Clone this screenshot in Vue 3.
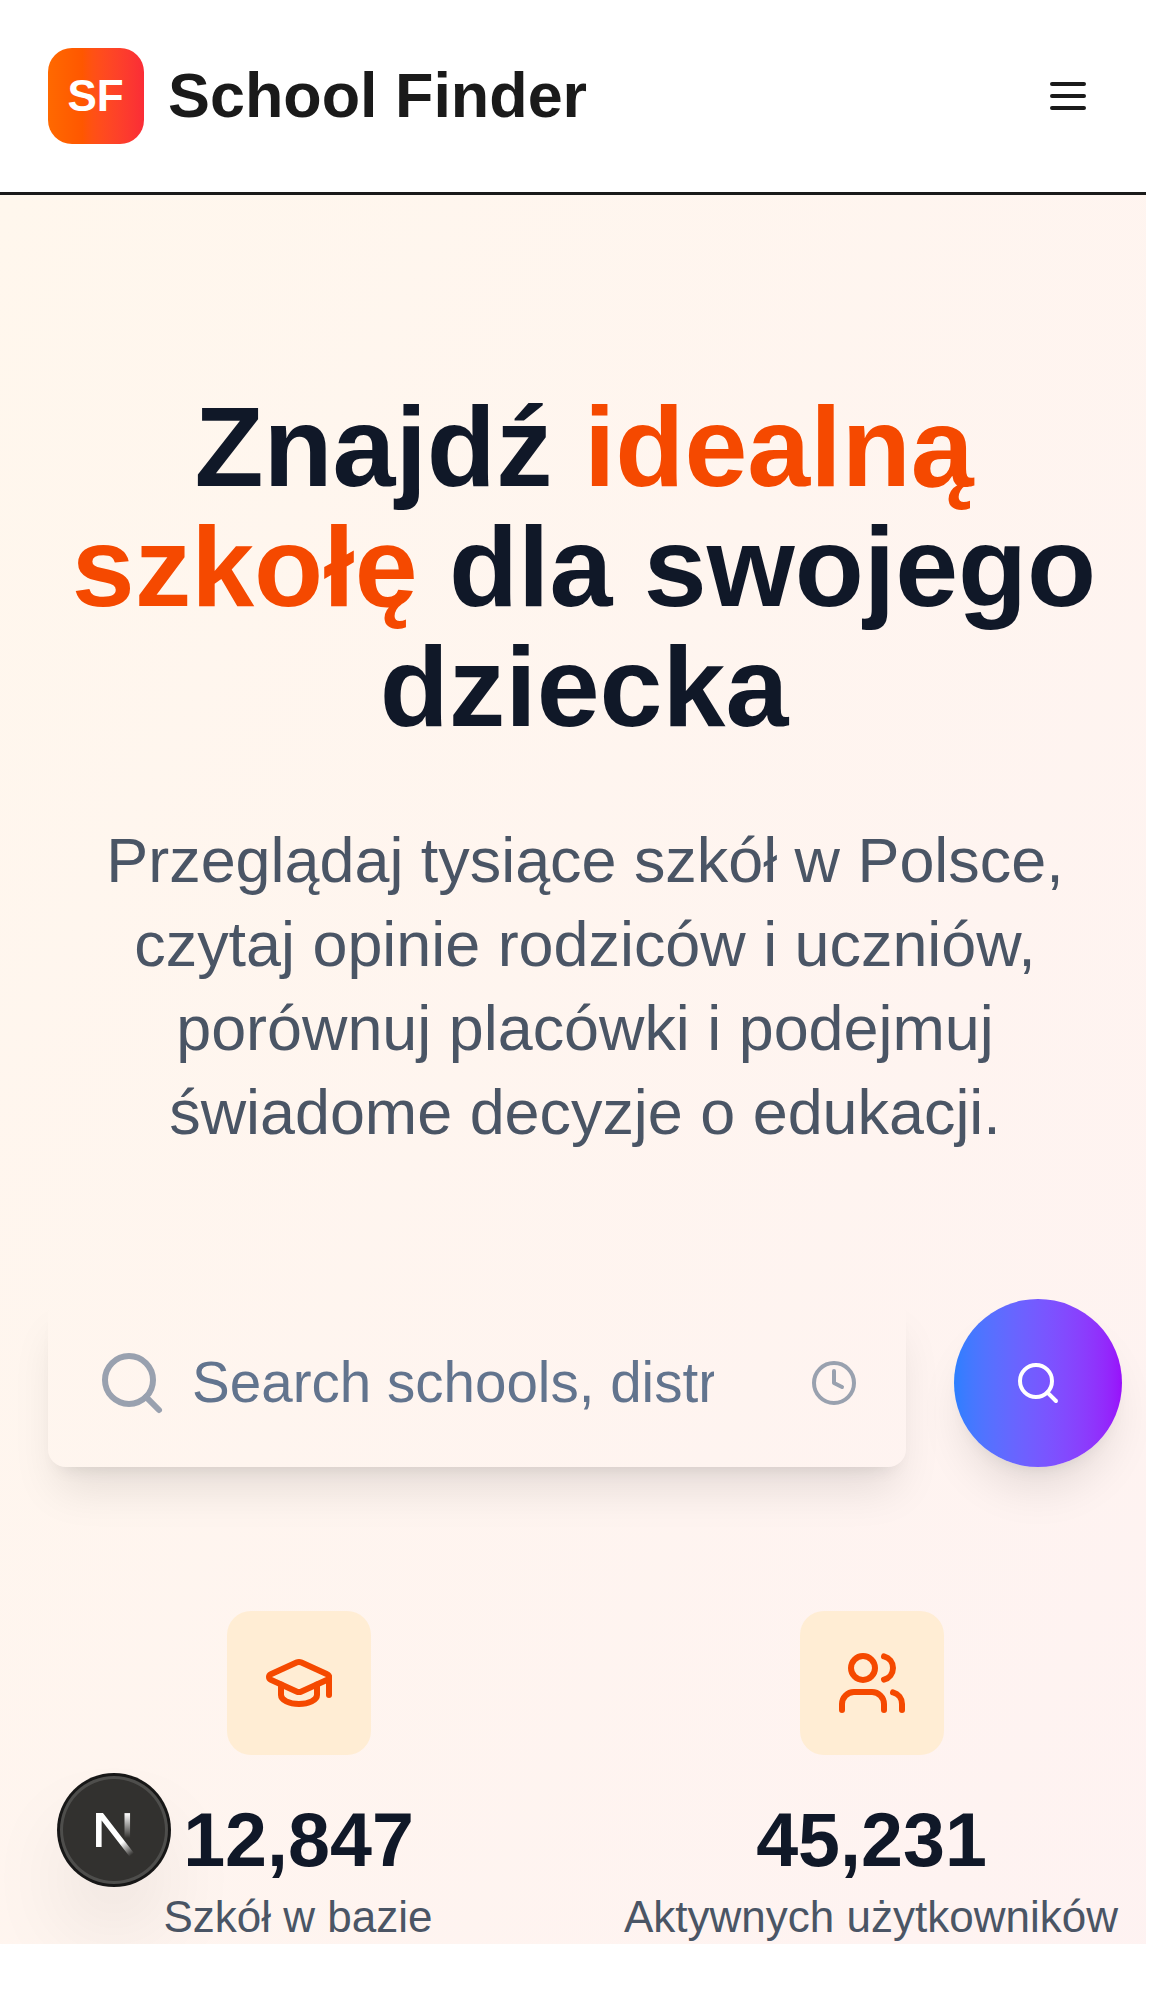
<script setup>
const stats = [
  { icon: 'cap', value: '12,847', label: 'Szkół w bazie' },
  { icon: 'users', value: '45,231', label: 'Aktywnych użytkowników' },
]
</script>

<template>
  <div class="page">
    <header class="header">
      <a class="brand">
        <span class="logo">SF</span>
        <span class="brand-name">School Finder</span>
      </a>
      <button class="menu" aria-label="Menu">
        <svg class="icon" width="48" height="48" viewBox="0 0 24 24">
          <path d="M4 6h16M4 12h16M4 18h16" />
        </svg>
      </button>
    </header>

    <section class="hero">
      <h1>Znajdź <span class="accent">idealną szkołę</span> dla swojego dziecka</h1>
      <p class="lead">
        Przeglądaj tysiące szkół w Polsce, czytaj opinie rodziców i uczniów,
        porównuj placówki i podejmuj świadome decyzje o edukacji.
      </p>

      <div class="search">
        <label class="field">
          <svg class="icon" width="72" height="72" viewBox="0 0 24 24">
            <circle cx="11" cy="11" r="8" />
            <path d="m21 21-4.34-4.34" />
          </svg>
          <input type="text" placeholder="Search schools, districts" />
          <svg class="icon" width="48" height="48" viewBox="0 0 24 24">
            <circle cx="12" cy="12" r="10" />
            <path d="M12 6v6l4 2" />
          </svg>
        </label>
        <button class="go" aria-label="Search">
          <svg class="icon" width="48" height="48" viewBox="0 0 24 24">
            <circle cx="11" cy="11" r="8" />
            <path d="m21 21-4.34-4.34" />
          </svg>
        </button>
      </div>

      <div class="stats">
        <div v-for="s in stats" :key="s.icon" class="stat">
          <div class="tile">
            <svg class="icon" width="72" height="72" viewBox="0 0 24 24">
              <template v-if="s.icon === 'cap'">
                <path d="M21.42 10.922a1 1 0 0 0-.019-1.838L12.83 5.18a2 2 0 0 0-1.66 0L2.6 9.08a1 1 0 0 0 0 1.832l8.57 3.908a2 2 0 0 0 1.66 0z" />
                <path d="M22 10v6" />
                <path d="M6 12.5V16a6 3 0 0 0 12 0v-3.5" />
              </template>
              <template v-else>
                <path d="M16 21v-2a4 4 0 0 0-4-4H6a4 4 0 0 0-4 4v2" />
                <path d="M16 3.128a4 4 0 0 1 0 7.744" />
                <path d="M22 21v-2a4 4 0 0 0-3-3.87" />
                <circle cx="9" cy="7" r="4" />
              </template>
            </svg>
          </div>
          <div class="value">{{ s.value }}</div>
          <div class="label">{{ s.label }}</div>
        </div>
      </div>
    </section>

    <div class="dev-badge">
      <svg width="108" height="108" viewBox="0 0 36 36" fill="none">
        <defs>
          <linearGradient id="n-diagonal" x1="9.956" y1="11.123" x2="15.478" y2="17.967" gradientUnits="userSpaceOnUse">
            <stop stop-color="#fff" />
            <stop offset="0.604" stop-color="#fff" stop-opacity="0" />
            <stop offset="1" stop-color="#fff" stop-opacity="0" />
          </linearGradient>
          <linearGradient id="n-stem" x1="11.822" y1="1.4" x2="11.791" y2="9.625" gradientUnits="userSpaceOnUse">
            <stop stop-color="#fff" />
            <stop offset="1" stop-color="#fff" stop-opacity="0" />
          </linearGradient>
          <clipPath id="n-clip"><rect x="1.41" y="1.3" width="18" height="18" /></clipPath>
        </defs>
        <g transform="translate(10.6 11.07)" clip-path="url(#n-clip)">
          <path d="M13.3 15.2 2.34 1V12.6" stroke="url(#n-diagonal)" stroke-width="1.86" />
          <path d="M11.825 1.3V13.1" stroke="url(#n-stem)" stroke-width="1.86" />
        </g>
      </svg>
    </div>
  </div>
</template>

<style>
body {
  background: #fff;
}
</style>

<style scoped>
.page {
  position: relative;
  width: 1146px;
  height: 1944px;
  overflow: hidden;
  font-family: "Liberation Sans", Arial, sans-serif;
}
.page * {
  box-sizing: border-box;
}
button {
  border: 0;
  padding: 0;
  background: none;
}
.icon {
  display: block;
  flex: none;
  fill: none;
  stroke: currentColor;
  stroke-width: 2;
  stroke-linecap: round;
  stroke-linejoin: round;
}
.header {
  display: flex;
  align-items: center;
  justify-content: space-between;
  height: 195px;
  padding: 0 54px 0 48px;
  background: #fff;
  border-bottom: 3px solid #1a1a1a;
  color: #1a1a1a;
}
.brand {
  display: flex;
  align-items: center;
  gap: 24px;
}
.logo {
  display: flex;
  align-items: center;
  justify-content: center;
  width: 96px;
  height: 96px;
  padding-right: 1px;
  border-radius: 24px;
  background: linear-gradient(to right in oklab, oklch(70.5% 0.213 47.604), oklch(63.7% 0.237 25.331));
  color: #fff;
  font-size: 44px;
  font-weight: 700;
  line-height: 60px;
}
.brand-name {
  padding-bottom: 2px;
  font-size: 62.86px;
  font-weight: 700;
  line-height: 84px;
}
.menu {
  color: #1a1a1a;
}
.hero {
  height: 2200px;
  padding: 192px 24px 0 48px;
  background: linear-gradient(to bottom right in oklab, #fff7ed, #fef2f2);
  text-align: center;
}
h1 {
  margin: 0 0 71px;
  padding-right: 2px;
  color: #101828;
  font-size: 113.1px;
  font-weight: 700;
  line-height: 120px;
}
.accent {
  color: #f54900;
}
.lead {
  margin: 0 0 145px;
  padding: 0 40px;
  color: #4a5565;
  font-size: 62.86px;
  line-height: 84px;
}
.search {
  display: flex;
  gap: 48px;
  margin-bottom: 144px;
}
.field {
  display: flex;
  flex: 1;
  min-width: 0;
  align-items: center;
  height: 168px;
  padding: 0 48px;
  border-radius: 18px;
  color: #99a1af;
  box-shadow: 0 30px 45px -9px rgb(0 0 0 / 0.1), 0 12px 18px -12px rgb(0 0 0 / 0.1);
}
input {
  width: 522px;
  height: 84px;
  margin: 0 auto 0 24px;
  padding: 0 0 2px;
  border: 0;
  outline: 0;
  background: transparent;
  font-family: inherit;
  font-size: 56.57px;
}
input::placeholder {
  color: #62748e;
  opacity: 1;
}
.go {
  display: flex;
  flex: none;
  align-items: center;
  justify-content: center;
  width: 168px;
  height: 168px;
  border-radius: 50%;
  background: linear-gradient(to right in oklab, oklch(62.3% 0.214 259.815), oklch(55.8% 0.288 302.321));
  color: #fff;
  box-shadow: 0 30px 45px -9px rgb(0 0 0 / 0.1), 0 12px 18px -12px rgb(0 0 0 / 0.1);
}
.stats {
  display: grid;
  grid-template-columns: repeat(2, minmax(0, 1fr));
  gap: 72px;
}
.stat {
  display: flex;
  flex-direction: column;
  align-items: center;
}
.tile {
  display: flex;
  align-items: center;
  justify-content: center;
  width: 144px;
  height: 144px;
  margin-bottom: 37px;
  padding-left: 1px;
  border-radius: 24px;
  background: #ffedd4;
  color: #f54900;
}
.value {
  color: #101828;
  font-size: 75.43px;
  font-weight: 700;
  line-height: 96px;
}
.label {
  margin-top: -1px;
  padding-right: 1px;
  color: #4a5565;
  font-size: 44px;
  line-height: 60px;
  white-space: nowrap;
}
/* Floating developer tools button, pinned over the page */
.dev-badge {
  position: absolute;
  left: 60px;
  bottom: 60px;
  width: 108px;
  height: 108px;
  border-radius: 50%;
  background: #32312f;
  box-shadow: 0 0 0 3px #171717, inset 0 0 0 3px hsl(0 0% 100% / 0.14), 0 48px 96px -24px rgb(0 0 0 / 0.24);
}
.dev-badge svg {
  display: block;
}
</style>
